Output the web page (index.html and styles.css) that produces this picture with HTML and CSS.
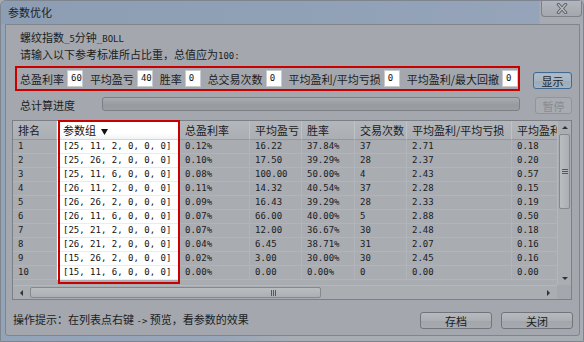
FILE: index.html
```html
<!DOCTYPE html>
<html>
<head>
<meta charset="utf-8">
<link rel="stylesheet" href="styles.css">
</head>
<body>
<div class="win">
  <div class="titlebar">
    <span class="title">参数优化</span>
    <div class="close">
      <svg width="14" height="11" viewBox="0 0 14 11"><path class="x-out" d="M3.5 1.5 L10.5 9.5 M10.5 1.5 L3.5 9.5"/><path class="x-in" d="M3.5 1.5 L10.5 9.5 M10.5 1.5 L3.5 9.5"/></svg>
    </div>
  </div>
  <div class="panel">
    <p class="info">螺纹指数<span class="m">_5</span>分钟<span class="m">_BOLL</span></p>
    <p class="info">请输入以下参考标准所占比重，总值应为<span class="m">100:</span></p>
    <div class="weights-row">
      <div class="weights">
        <span class="field"><span>总盈利率</span><span class="inp">60</span></span>
        <span class="field"><span>平均盈亏</span><span class="inp">40</span></span>
        <span class="field"><span>胜率</span><span class="inp">0</span></span>
        <span class="field"><span>总交易次数</span><span class="inp">0</span></span>
        <span class="field"><span>平均盈利/平均亏损</span><span class="inp">0</span></span>
        <span class="field"><span>平均盈利/最大回撤</span><span class="inp">0</span></span>
      </div>
      <button class="btn btn-default">显示</button>
    </div>
    <div class="progress-row">
      <span class="progress-label">总计算进度</span>
      <div class="progress"></div>
      <button class="btn btn-disabled">暂停</button>
    </div>
    <div class="lv">
      <div class="lv-body">
        <div class="lv-row lv-head">
          <div class="c">排名</div>
          <div class="c c-sel">参数组 <svg class="sort" width="7" height="6" viewBox="0 0 7 6"><path d="M0 0 H7 L3.5 6 Z"/></svg></div>
          <div class="c">总盈利率</div>
          <div class="c">平均盈亏</div>
          <div class="c">胜率</div>
          <div class="c">交易次数</div>
          <div class="c">平均盈利/平均亏损</div>
          <div class="c">平均盈利/最大回撤</div>
        </div>
        <div class="lv-row"><div class="c">1</div><div class="c c-sel">[25, 11, 2, 0, 0, 0]</div><div class="c">0.12%</div><div class="c">16.22</div><div class="c">37.84%</div><div class="c">37</div><div class="c">2.71</div><div class="c">0.18</div></div>
        <div class="lv-row"><div class="c">2</div><div class="c c-sel">[25, 26, 2, 0, 0, 0]</div><div class="c">0.10%</div><div class="c">17.50</div><div class="c">39.29%</div><div class="c">28</div><div class="c">2.37</div><div class="c">0.20</div></div>
        <div class="lv-row"><div class="c">3</div><div class="c c-sel">[25, 11, 6, 0, 0, 0]</div><div class="c">0.08%</div><div class="c">100.00</div><div class="c">50.00%</div><div class="c">4</div><div class="c">2.43</div><div class="c">0.57</div></div>
        <div class="lv-row"><div class="c">4</div><div class="c c-sel">[26, 11, 2, 0, 0, 0]</div><div class="c">0.11%</div><div class="c">14.32</div><div class="c">40.54%</div><div class="c">37</div><div class="c">2.28</div><div class="c">0.15</div></div>
        <div class="lv-row"><div class="c">5</div><div class="c c-sel">[26, 26, 2, 0, 0, 0]</div><div class="c">0.09%</div><div class="c">16.43</div><div class="c">39.29%</div><div class="c">28</div><div class="c">2.33</div><div class="c">0.19</div></div>
        <div class="lv-row"><div class="c">6</div><div class="c c-sel">[26, 11, 6, 0, 0, 0]</div><div class="c">0.07%</div><div class="c">66.00</div><div class="c">40.00%</div><div class="c">5</div><div class="c">2.88</div><div class="c">0.50</div></div>
        <div class="lv-row"><div class="c">7</div><div class="c c-sel">[25, 21, 2, 0, 0, 0]</div><div class="c">0.07%</div><div class="c">12.00</div><div class="c">36.67%</div><div class="c">30</div><div class="c">2.48</div><div class="c">0.18</div></div>
        <div class="lv-row"><div class="c">8</div><div class="c c-sel">[26, 21, 2, 0, 0, 0]</div><div class="c">0.04%</div><div class="c">6.45</div><div class="c">38.71%</div><div class="c">31</div><div class="c">2.07</div><div class="c">0.16</div></div>
        <div class="lv-row"><div class="c">9</div><div class="c c-sel">[15, 26, 2, 0, 0, 0]</div><div class="c">0.02%</div><div class="c">3.00</div><div class="c">30.00%</div><div class="c">30</div><div class="c">2.45</div><div class="c">0.16</div></div>
        <div class="lv-row"><div class="c">10</div><div class="c c-sel">[15, 11, 6, 0, 0, 0]</div><div class="c">0.00%</div><div class="c">0.00</div><div class="c">0.00%</div><div class="c">0</div><div class="c">0.00</div><div class="c">0.00</div></div>
      </div>
      <div class="vscroll">
        <div class="sb-btn"><span class="arr arr-up"></span></div>
        <div class="vthumb"><span class="grip-h"></span><span class="grip-h"></span><span class="grip-h"></span></div>
        <div class="sb-track"></div>
        <div class="sb-btn"><span class="arr arr-down"></span></div>
      </div>
      <div class="hscroll">
        <div class="sb-btn sb-btn-h"><span class="arr arr-left"></span></div>
        <div class="hthumb"><span class="grip-v"></span><span class="grip-v"></span><span class="grip-v"></span></div>
        <div class="sb-track"></div>
        <div class="sb-btn sb-btn-h"><span class="arr arr-right"></span></div>
      </div>
      <div class="corner"></div>
      <div class="highlight"></div>
    </div>
    <div class="footer">
      <span class="hint">操作提示：在列表点右键 <span class="m">-&gt;</span> 预览，看参数的效果</span>
      <button class="btn btn-wide">存档</button>
      <button class="btn btn-wide">关闭</button>
    </div>
  </div>
</div>
</body>
</html>
```

FILE: styles.css
```css
* { box-sizing: border-box; margin: 0; padding: 0; }
html, body { width: 584px; height: 342px; overflow: hidden; }
body {
  font-family: "Noto Sans CJK SC", "Noto Sans", sans-serif;
  font-size: 11px;
  color: #1b1c1e;
  background: #a6abb1;
}
.m { font-family: "DejaVu Sans Mono", "Liberation Mono", monospace; font-size: 9px; }

.win {
  width: 584px;
  height: 342px;
  display: flex;
  flex-direction: column;
  background: linear-gradient(to right, #93a3b8 0, #98a6b9 220px, #a8adb3 290px);
  border: 1px solid #7e858f;
  border-radius: 6px 6px 0 0;
}
.titlebar {
  height: 23px;
  flex: none;
  display: flex;
  align-items: flex-start;
  background: linear-gradient(to right, #8c9db4 0, #90a0b7 300px, #95a4b9 538px, #a6abb2 539px);
  border-radius: 6px 6px 0 0;
}
.title { padding: 3px 0 0 7px; line-height: 16px; color: #1e2024; }
.close {
  margin-left: auto;
  margin-right: 1px;
  width: 41px;
  height: 16px;
  display: flex;
  align-items: center;
  justify-content: center;
  border: 1px solid #7d8187;
  border-top: none;
  border-radius: 0 0 4px 4px;
  background: linear-gradient(#b3b7bd, #a4a8ae);
}
.x-out { stroke: #5d6166; stroke-width: 3.4; stroke-linecap: round; fill: none; }
.x-in { stroke: #b9bdc2; stroke-width: 1.4; stroke-linecap: round; fill: none; }

.panel {
  flex: none;
  height: 312px;
  margin: 0 3px 0 4px;
  padding: 0 7px 0 6px;
  background: #a4a8ae;
  border: 1px solid #80858b;
  border-radius: 0 0 3px 3px;
  display: flex;
  flex-direction: column;
}
.info { margin-left: 8px; line-height: 15px; }
.info:first-child { margin-top: 5px; }

.weights-row { display: flex; margin-top: 2px; }
.weights {
  margin-left: 3px;
  width: 505px;
  height: 25px;
  border: 2px solid #c80000;
  padding: 0 0 0 3px;
  display: flex;
  align-items: center;
  justify-content: space-between;
}
.field { display: flex; align-items: center; gap: 3px; white-space: nowrap; }
.inp {
  width: 16px;
  height: 17px;
  background: #fff;
  border: 1px solid #c9cbcf;
  font-family: "DejaVu Sans Mono", monospace;
  font-size: 9px;
  line-height: 15px;
  padding-left: 3px;
  color: #111;
}

.btn {
  font-family: "Noto Sans CJK SC", sans-serif;
  font-size: 11px;
  color: #1b1c1e;
  border: 1px solid #72767c;
  border-radius: 3px;
  background: linear-gradient(#b6b9bd 0, #acafb3 50%, #a2a5a9 51%, #a7aaae 100%);
  line-height: 14px;
}
.btn-default {
  margin: 6px 0 0 auto;
  width: 39px;
  height: 17px;
  border-color: #3f6a93;
  box-shadow: inset 0 0 0 1px #9fb6ca;
  background: linear-gradient(#b1bcc7 0, #a8b4c0 50%, #9dabb8 51%, #a4b1bd 100%);
}
.btn-disabled {
  margin-left: 15px;
  width: 37px;
  height: 17px;
  border-color: #91959a;
  color: #878b90;
  background: #a8acb1;
}
.btn-wide { width: 72px; height: 17px; }

.progress-row { display: flex; align-items: flex-start; margin-top: 6px; }
.progress-label { margin-left: 8px; width: 82px; line-height: 16px; }
.progress {
  flex: 1;
  height: 14px;
  border: 1px solid #7b8086;
  border-radius: 3px;
  background: linear-gradient(#a9adb2, #979ba0 60%, #9b9fa4);
}

.lv {
  position: relative;
  margin-top: 6px;
  height: 180px;
  border: 1px solid #7b8086;
  background: #a9acb1;
  display: grid;
  grid-template-columns: 1fr 14px;
  grid-template-rows: 1fr 14px;
}
.lv-body { overflow: hidden; }
.lv-row {
  display: grid;
  grid-template-columns: 44px 123px 70px 52px 53px 52px 105px 90px;
  height: 14px;
}
.c {
  padding-left: 5px;
  white-space: nowrap;
  overflow: hidden;
  border-right: 1px solid #b1b4b8;
  border-bottom: 1px solid #b1b4b8;
  font-family: "DejaVu Sans Mono", "Liberation Mono", monospace;
  font-size: 9px;
  line-height: 13px;
  color: #1a1b1d;
}
.c-sel { background: #fff; border-color: #ececec; color: #111; padding-left: 6px; }
.lv-head { height: 19px; }
.lv-head .c {
  font-family: "Noto Sans CJK SC", sans-serif;
  font-size: 11px;
  line-height: 18px;
  background: linear-gradient(#b3b6ba, #abaeb2);
  border-right-color: #bfc2c6;
  border-bottom-color: #94989d;
}
.lv-head .c-sel { background: linear-gradient(#ffffff 70%, #f1f2f3); border-bottom-color: #d3d5d8; }
.sort { fill: #111; margin-left: 3px; vertical-align: 0; }

.vscroll {
  display: flex;
  flex-direction: column;
  background: #aaadb1;
  border-left: 1px solid #b4b7bb;
}
.hscroll {
  display: flex;
  background: #aaadb1;
  border-top: 1px solid #b4b7bb;
}
.corner { background: #a4a8ae; }
.sb-btn { flex: none; height: 13px; display: flex; align-items: center; justify-content: center; }
.sb-btn-h { width: 17px; height: auto; }
.sb-track { flex: 1; }
.vthumb {
  flex: none;
  height: 75px;
  margin: 0 1px;
  border: 1px solid #85898e;
  border-radius: 2px;
  background: linear-gradient(to right, #b9bcc0, #acafb3);
  display: flex;
  flex-direction: column;
  align-items: center;
  justify-content: center;
  gap: 1px;
}
.hthumb {
  flex: none;
  width: 291px;
  margin: 1px 0;
  border: 1px solid #85898e;
  border-radius: 2px;
  background: linear-gradient(#b9bcc0, #acafb3);
  display: flex;
  align-items: center;
  justify-content: flex-end;
  padding-right: 44px;
  gap: 1px;
}
.grip-h { width: 6px; height: 1px; background: #55595e; }
.grip-v { width: 1px; height: 6px; background: #55595e; }
.arr { width: 0; height: 0; border: 3px solid transparent; }
.arr-up { border-bottom: 3px solid #2f3236; border-top: 0; }
.arr-down { border-top: 3px solid #2f3236; border-bottom: 0; }
.arr-left { border-right: 3px solid #2f3236; border-left: 0; }
.arr-right { border-left: 3px solid #2f3236; border-right: 0; }

.highlight {
  position: absolute;
  left: 45px;
  top: -1px;
  width: 122px;
  height: 164px;
  border: 2px solid #c80000;
  pointer-events: none;
}

.footer { display: flex; align-items: center; margin-top: 11px; gap: 9px; margin-right: -1px; }
.hint { margin-left: 1px; margin-right: auto; line-height: 17px; }
```
